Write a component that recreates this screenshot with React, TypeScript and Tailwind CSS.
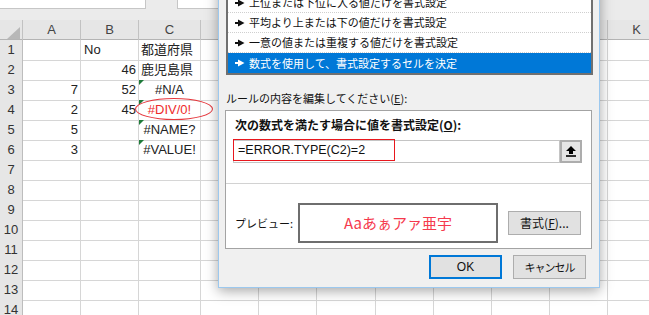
import React from 'react';

const colNames = ['A', 'B', 'C', 'D', 'E', 'F', 'G', 'H', 'I', 'J', 'K'];
// columns D..J sit under the dialog, their letters are never seen
const hiddenCols = ['D', 'E', 'F', 'G', 'H', 'I', 'J'];

const rows = [
  { a: '', b: 'No', c: '都道府県' },
  { a: '', b: '46', c: '鹿児島県' },
  { a: '7', b: '52', c: '#N/A', err: true },
  { a: '2', b: '45', c: '#DIV/0!', err: true, red: true },
  { a: '5', b: '', c: '#NAME?', err: true },
  { a: '3', b: '', c: '#VALUE!', err: true },
  {}, {}, {}, {}, {}, {}, {}, {},
] as { a?: string; b?: string; c?: string; err?: boolean; red?: boolean }[];

const ruleTypes = [
  '上位または下位に入る値だけを書式設定',
  '平均より上または下の値だけを書式設定',
  '一意の値または重複する値だけを書式設定',
  '数式を使用して、書式設定するセルを決定',
];

const gridCols = 'grid grid-cols-[23px_58px_58px_62px_58px_58px_59px_58px_58px_58px_58px_58px]';

const Arrow = ({ color }: { color: string }) => (
  <svg width="10" height="8" viewBox="0 0 10 8" className="shrink-0">
    <rect x="0" y="3" width="4" height="2" fill={color} />
    <polygon points="3,0.5 9.5,4 3,7.5" fill={color} />
  </svg>
);

const Sheet = () => (
  <div className="font-['Liberation_Sans','Noto_Sans_CJK_JP',sans-serif] text-[13px] text-[#222]">
    <div className="flex h-[20px] bg-[#ebebeb]">
      <div className="w-[146px] h-[9px] bg-white border-b border-r border-[#c6c6c6]" />
      <div className="ml-[31px] w-[423px] h-[9px] bg-white border-b border-l border-[#c6c6c6]" />
    </div>

    <div className={`${gridCols} h-[20px] bg-[#e6e6e6] border-b border-[#b4b4b4]`}>
      <div className="relative border-r border-[#c2c2c2]">
        <div className="absolute left-[7px] top-[7px] w-0 h-0 border-l-[13px] border-l-transparent border-b-[12px] border-b-[#b8b8b8]" />
      </div>
      {colNames.map((c) => (
        <div key={c} className="flex items-center justify-center border-r border-[#c2c2c2] text-[#444]">
          {hiddenCols.includes(c) ? null : c}
        </div>
      ))}
    </div>

    {rows.map((r, i) => (
      <div key={i} className={`${gridCols} h-[20px]`}>
        <div className="flex items-center justify-center bg-[#e6e6e6] border-r border-b border-[#bdbdbd] text-[#333]">
          {i + 1}
        </div>
        <div className="flex items-center justify-end pr-[2px] border-r border-b border-[#d6d6d6]">{r.a}</div>
        <div
          className={`flex items-center pr-[2px] pl-[3px] border-r border-b border-[#d6d6d6] ${
            r.b && !isNaN(Number(r.b)) ? 'justify-end' : 'justify-start'
          }`}
        >
          {r.b}
        </div>
        <div
          className={`relative flex items-center border-r border-b border-[#d6d6d6] ${
            r.err ? 'justify-center' : 'justify-start pl-[2px]'
          } ${r.red ? 'text-[#ee2b2b]' : ''}`}
        >
          {r.err && (
            <div className="absolute left-0 top-0 w-0 h-0 border-t-[5px] border-t-[#1f7a3a] border-r-[5px] border-r-transparent" />
          )}
          {r.c}
        </div>
        {colNames.slice(3).map((c) => (
          <div key={c} className="border-r border-b border-[#d6d6d6]" />
        ))}
      </div>
    ))}
  </div>
);

const Dialog = () => (
  <div className="absolute left-[218px] top-[-17px] w-[382px] h-[305px] flex flex-col bg-[#f0f0f0] border border-[#9cc8ee] shadow-[0_3px_12px_rgba(0,0,0,0.35)] font-['Noto_Sans_CJK_JP',sans-serif] text-[#111]">
    <div className="mt-[7px] ml-[7px] w-[367px] border-2 border-[#707070] bg-white">
      {ruleTypes.map((t, i) => {
        const sel = i === ruleTypes.length - 1;
        return (
          <div
            key={t}
            className={`flex items-center h-[20px] pl-[7px] gap-[4px] text-[11px] whitespace-nowrap ${
              sel ? 'bg-[#0078d7] text-white' : 'border-b border-dotted border-[#cfcfcf]'
            }`}
          >
            <Arrow color={sel ? '#ffffff' : '#111111'} />
            <span>{t}</span>
          </div>
        );
      })}
    </div>

    <div className="mt-[15px] ml-[7px] h-[16px] leading-[16px] text-[11px]">
      ルールの内容を編集してください(<span className="underline">E</span>):
    </div>

    <div className="mt-[4px] ml-[6px] w-[367px] h-[139px] flex flex-col bg-white border border-[#a3a3a3]">
      <div className="mt-[6px] ml-[9px] h-[16px] leading-[16px] text-[12px] font-bold">
        次の数式を満たす場合に値を書式設定(<span className="underline">O</span>):
      </div>

      <div className="mt-[7px] ml-[7px] mr-[9px] h-[23px] flex">
        <div className="flex-1 flex bg-white border border-[#c4c4c4]">
          <div className="w-[162px] h-[22px] -ml-px -mt-[2px] flex items-center pl-[4px] border border-[#e8171d] font-['Liberation_Sans',sans-serif] text-[12.5px]">
            =ERROR.TYPE(C2)=2
          </div>
        </div>
        <div className="w-[22px] h-[23px] flex items-center justify-center bg-[#e5e5e5] border-2 border-[#adadad]">
          <svg width="10" height="11" viewBox="0 0 10 11">
            <polygon points="5,0 10,5 7,5 7,8 3,8 3,5 0,5" fill="#000" />
            <rect x="0" y="9.2" width="10" height="1.6" fill="#000" />
          </svg>
        </div>
      </div>

      <div className="mt-[20px] h-px bg-[#d2d2d2]" />

      <div className="mt-[19px] ml-[9px] flex items-center h-[40px]">
        <div className="w-[63px] text-[11px]">プレビュー:</div>
        <div className="w-[200px] h-[40px] flex items-center justify-center border-2 border-[#6e6e6e] text-[15px] text-[#f5394d]">
          Aaあぁアァ亜宇
        </div>
        <div className="ml-[10px] w-[73px] h-[24px] flex items-center justify-center bg-[#e1e1e1] border border-[#adadad] text-[12px]">
          書式(<span className="underline">F</span>)...
        </div>
      </div>
    </div>

    <div className="mt-[6px] mr-[13px] flex justify-end gap-[11px] text-[12px]">
      <div className="w-[73px] h-[24px] flex items-center justify-center bg-[#e1e1e1] border-2 border-[#0078d7] font-['Liberation_Sans',sans-serif]">
        OK
      </div>
      <div className="w-[73px] h-[24px] flex items-center justify-center bg-[#e1e1e1] border border-[#adadad] text-[11px] tracking-[-1px]">
        キャンセル
      </div>
    </div>
  </div>
);

export default function App() {
  return (
    <div className="relative w-[649px] h-[315px] overflow-hidden bg-white">
      <Sheet />
      <div className="absolute left-[135px] top-[98px] w-[78px] h-[22px] rounded-[50%] border border-[#e6363c]" />
      <Dialog />
    </div>
  );
}
